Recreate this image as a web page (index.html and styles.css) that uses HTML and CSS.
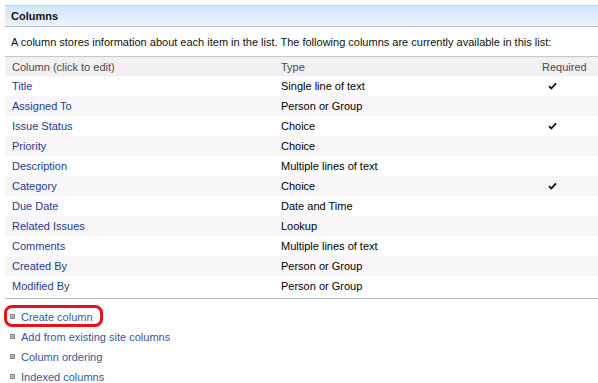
FILE: index.html
```html
<!DOCTYPE html>
<html lang="en">
<head>
    <meta charset="UTF-8">
    <title>Columns</title>
    <link rel="stylesheet" href="styles.css">
</head>
<body>

    <div class="section-bar">Columns</div>

    <p class="intro">A column stores information about each item in the list. The following columns are currently available in this list:</p>

    <!-- Column list -->
    <table class="columns">
        <thead>
            <tr>
                <th class="col-name">Column (click to edit)</th>
                <th class="col-type">Type</th>
                <th class="col-req">Required</th>
            </tr>
        </thead>
        <tbody>
            <tr><td><a href="#">Title</a></td><td>Single line of text</td><td class="check"><svg width="9" height="8" viewBox="0 0 9 8"><path d="M1 4.2 L3.3 6.5 L8 1.3" fill="none" stroke="#111" stroke-width="1.8"/></svg></td></tr>
            <tr><td><a href="#">Assigned To</a></td><td>Person or Group</td><td></td></tr>
            <tr><td><a href="#">Issue Status</a></td><td>Choice</td><td class="check"><svg width="9" height="8" viewBox="0 0 9 8"><path d="M1 4.2 L3.3 6.5 L8 1.3" fill="none" stroke="#111" stroke-width="1.8"/></svg></td></tr>
            <tr><td><a href="#">Priority</a></td><td>Choice</td><td></td></tr>
            <tr><td><a href="#">Description</a></td><td>Multiple lines of text</td><td></td></tr>
            <tr><td><a href="#">Category</a></td><td>Choice</td><td class="check"><svg width="9" height="8" viewBox="0 0 9 8"><path d="M1 4.2 L3.3 6.5 L8 1.3" fill="none" stroke="#111" stroke-width="1.8"/></svg></td></tr>
            <tr><td><a href="#">Due Date</a></td><td>Date and Time</td><td></td></tr>
            <tr><td><a href="#">Related Issues</a></td><td>Lookup</td><td></td></tr>
            <tr><td><a href="#">Comments</a></td><td>Multiple lines of text</td><td></td></tr>
            <tr><td><a href="#">Created By</a></td><td>Person or Group</td><td></td></tr>
            <tr><td><a href="#">Modified By</a></td><td>Person or Group</td><td></td></tr>
        </tbody>
    </table>

    <!-- Actions -->
    <ul class="actions">
        <li class="highlighted"><a href="#">Create column</a><span class="callout"></span></li>
        <li><a href="#">Add from existing site columns</a></li>
        <li><a href="#">Column ordering</a></li>
        <li><a href="#">Indexed columns</a></li>
    </ul>

</body>
</html>
```

FILE: styles.css
```css
body {
    margin: 0;
    font-family: 'Liberation Sans', Arial, sans-serif;
    font-size: 11px;
    color: #000;
    background: #fff;
}

a {
    text-decoration: none;
}

.section-bar {
    margin: 5px 0 0 5px;
    height: 20px;
    line-height: 21px;
    padding-left: 6px;
    font-weight: bold;
    color: #111;
    background: linear-gradient(#d4e6fd, #eef1fb);
    border-top: 1px solid #b9d5f0;
    border-bottom: 1px solid #a3c3dc;
}

.intro {
    margin: 7px 0 0 11px;
    line-height: 16px;
    color: #111;
}

.columns {
    margin: 6px 0 0 5px;
    width: 593px;
    border-collapse: collapse;
    border-bottom: 1px solid #a6bccb;
}

.columns th {
    height: 19px;
    font-weight: normal;
    text-align: left;
    color: #4a4a4a;
    background: #f2f0f2;
    border-top: 1px solid #c8c8c8;
    padding: 0;
}

.columns td {
    height: 20px;
    padding: 0;
}

.columns tbody tr:nth-child(even) td {
    background: #f8f5f8;
}

.columns tbody tr:last-child td {
    height: 22px;
    vertical-align: top;
    line-height: 20px;
}

.columns th:first-child,
.columns td:first-child {
    width: 269px;
    padding-left: 7px;
}

.columns .col-type {
    width: 261px;
}

.columns td a {
    color: #1d3b8b;
}

.columns .check {
    padding-left: 6px;
}

.columns .check svg {
    display: block;
}

.actions {
    list-style: none;
    margin: 8px 0 0;
    padding: 0 0 0 10px;
}

.actions li {
    position: relative;
    height: 20px;
    line-height: 20px;
    padding-left: 11px;
}

.actions li::before {
    content: '';
    position: absolute;
    left: 0;
    top: 7px;
    width: 3px;
    height: 3px;
    background: #b4b4b4;
    border: 1px solid #8c8c8c;
}

.actions a {
    color: #3a5796;
}

.callout {
    position: absolute;
    left: -6px;
    top: -2px;
    width: 93px;
    height: 16px;
    border: 3px solid #e5121e;
    border-radius: 8px;
}
```
